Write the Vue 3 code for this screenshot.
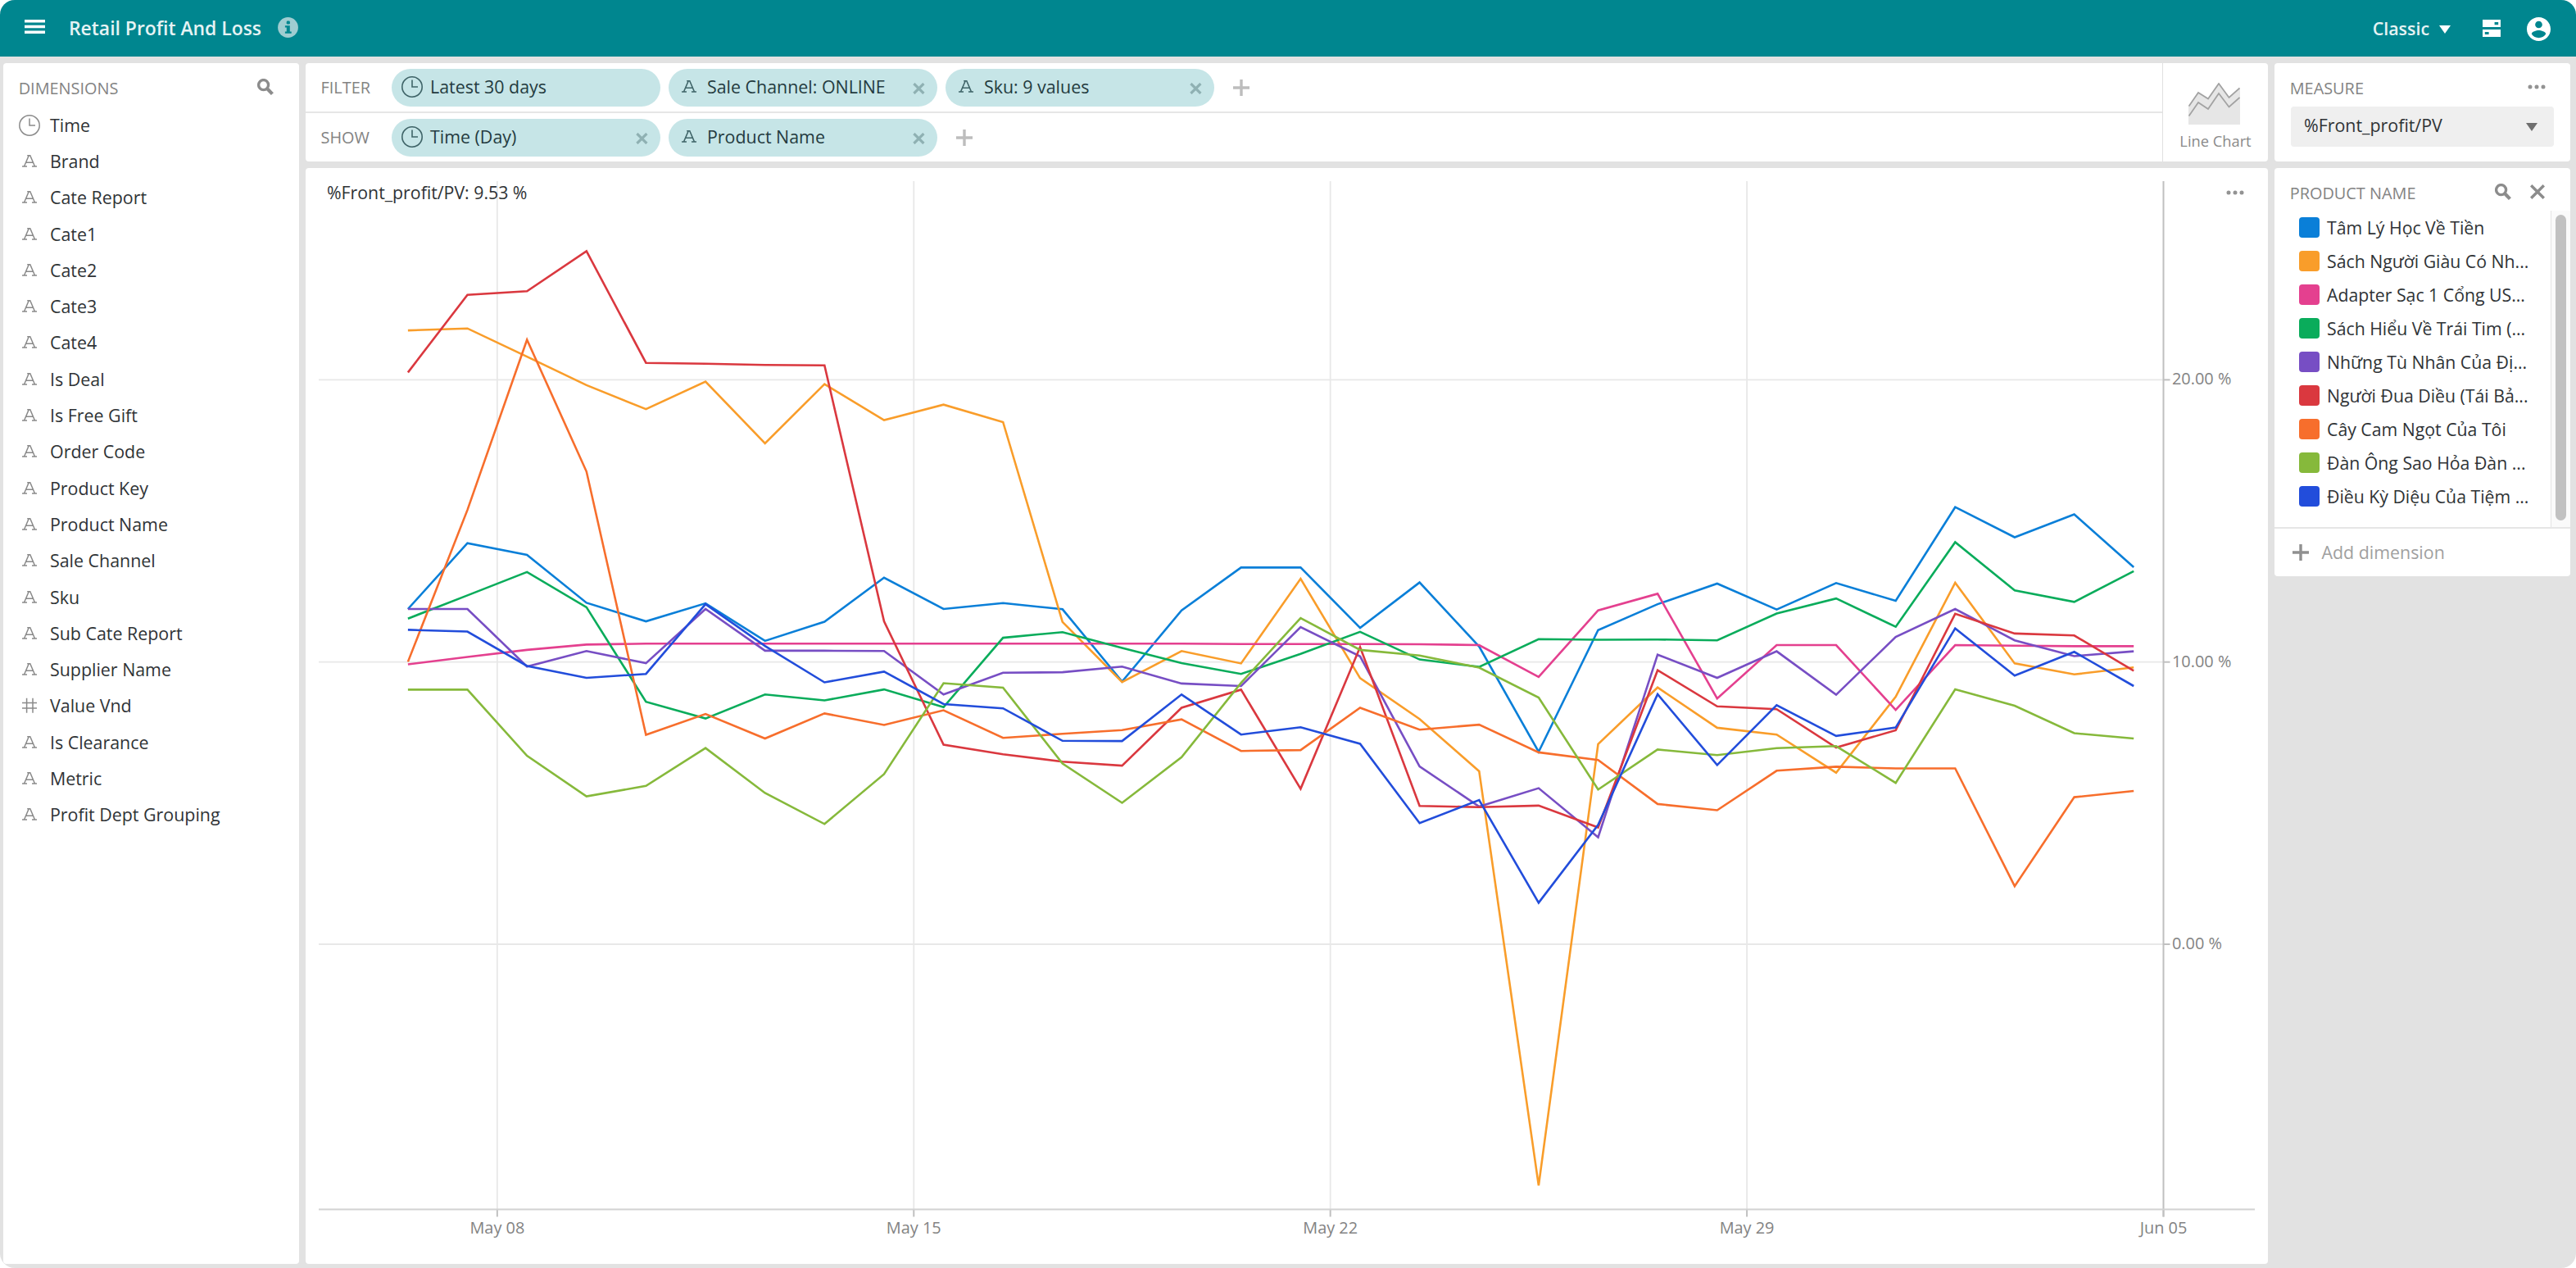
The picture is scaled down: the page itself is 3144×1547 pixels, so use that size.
<template>
  <div class="app">
    <header class="topbar">
      <svg class="menu" viewBox="0 0 25 17">
        <path d="M0 0h25v3.6H0zM0 6.7h25v3.6H0zM0 13.4h25V17H0z" />
      </svg>
      <h1>Retail Profit And Loss</h1>
      <svg class="info" viewBox="0 0 25 25">
        <circle cx="12.5" cy="12.5" r="12.4" />
        <rect class="mark" x="10.7" y="4.6" width="4.2" height="4" rx="1.4" />
        <path class="mark" d="M8.9 10.2h5.9v7.2h1.9v2.4H8.9v-2.4h1.9v-4.8H8.9z" />
      </svg>
      <div class="spacer"></div>
      <div class="theme">
        <span>Classic</span>
        <svg class="caret" viewBox="0 0 14 10"><path d="M0 0h14L7 10z" /></svg>
      </div>
      <svg class="server" viewBox="0 0 22 21">
        <path fill-rule="evenodd" d="M0 0h22v9H0zM14.6 3.1h4.6v3.1h-4.6zM0 12h22v9H0zM2.8 14.9h4.8v3.1H2.8z" />
      </svg>
      <svg class="avatar" viewBox="2 2 20 20">
        <path d="M12 2C6.48 2 2 6.48 2 12s4.48 10 10 10 10-4.48 10-10S17.52 2 12 2zm0 3.2c1.66 0 3 1.34 3 3s-1.34 3-3 3-3-1.34-3-3 1.34-3 3-3zm0 14.2c-2.5 0-4.71-1.28-6-3.22.03-1.99 4-3.08 6-3.08 1.99 0 5.97 1.09 6 3.08-1.29 1.94-3.5 3.22-6 3.22z" />
      </svg>
    </header>

    <main class="main">
      <aside class="panel">
        <div class="panel-head">
          <span>DIMENSIONS</span>
          <svg class="search" viewBox="0 0 20 20"><circle cx="7.6" cy="7.6" r="6" /><path d="M12 12l6.4 6.6" /></svg>
        </div>
        <ul class="dims">
          <li v-for="d in dimensions" :key="d.name">
            <svg class="type" viewBox="0 0 26 26"><path :d="typeIcons[d.type]" /></svg>
            <span>{{ d.name }}</span>
          </li>
        </ul>
      </aside>

      <section class="center">
        <div class="panel controls">
          <div class="tiles">
            <div v-for="row in tileRows" :key="row.label" class="tile-row">
              <span class="row-label">{{ row.label }}</span>
              <div v-for="t in row.items" :key="t.text" class="chip">
                <svg class="type" viewBox="0 0 26 26"><path :d="typeIcons[t.type]" /></svg>
                <span>{{ t.text }}</span>
                <svg v-if="t.removable" class="remove" viewBox="0 0 15 14"><path d="M1.4 1l12 12M13.4 1l-12 12" /></svg>
              </div>
              <svg class="add" viewBox="0 0 20 20"><path d="M10 0v20M0 10h20" /></svg>
            </div>
          </div>
          <div class="vis">
            <svg class="vis-icon" viewBox="0 0 63 51">
              <path class="area" d="M0 28.5L12 12l12 7.5L37 1l12.5 17L63 6.5V51H0z" />
              <path class="line" d="M.5 28.5L12 12l12 7.5L37 1l12.5 17L62.5 6.5M.5 40.5L12 24l12 8L37 13l12.5 16.5L62.5 18" />
            </svg>
            <span>Line Chart</span>
          </div>
        </div>

        <div class="panel chart">
          <svg class="plot" viewBox="0 0 2395 1337">
            <g class="grid">
              <line v-for="t in xTicks.slice(0, 4)" :key="t.label" :x1="t.x" :x2="t.x" y1="16" :y2="axisY" />
              <line v-for="t in yTicks" :key="t.label" x1="16" :x2="axisX" :y1="t.y" :y2="t.y" />
            </g>
            <g class="axis">
              <path :d="`M${axisX} 16V${axisY + 9}`" />
              <line v-for="t in yTicks" :key="t.label" :x1="axisX" :x2="axisX + 8" :y1="t.y" :y2="t.y" />
              <line v-for="t in xTicks" :key="t.label" :x1="t.x" :x2="t.x" :y1="axisY" :y2="axisY + 9" />
              <path class="base" :d="`M16 ${axisY}H2379`" />
            </g>
            <path v-for="s in series" :key="s.name" class="series" :d="linePath(s.values)" :stroke="s.color" />
            <text v-for="t in yTicks" :key="t.label" :x="axisX + 10.5" :y="t.y + 6">{{ t.label }}</text>
            <text v-for="t in xTicks" :key="t.label" class="x-label" :x="t.x" :y="axisY + 29">{{ t.label }}</text>
          </svg>
          <div class="chart-title">%Front_profit/PV: 9.53 %</div>
          <svg class="dots chart-dots" viewBox="0 0 22 6"><path d="M3 3h0M11 3h0M19 3h0" /></svg>
        </div>
      </section>

      <aside class="right">
        <div class="panel measure">
          <div class="panel-head">
            <span>MEASURE</span>
            <svg class="dots" viewBox="0 0 22 6"><path d="M3 3h0M11 3h0M19 3h0" /></svg>
          </div>
          <div class="select">
            <span>%Front_profit/PV</span>
            <svg class="caret" viewBox="0 0 14 10"><path d="M0 0h14L7 10z" /></svg>
          </div>
        </div>

        <div class="panel legend">
          <div class="panel-head">
            <span>PRODUCT NAME</span>
            <svg class="search" viewBox="0 0 20 20"><circle cx="7.6" cy="7.6" r="6" /><path d="M12 12l6.4 6.6" /></svg>
            <svg class="close" viewBox="0 0 18 18"><path d="M1.2 1.2l15.6 15.6M16.8 1.2L1.2 16.8" /></svg>
          </div>
          <div class="legend-body">
            <ul>
              <li v-for="s in series" :key="s.name">
                <i class="swatch" :style="{ background: s.color }"></i>
                <span>{{ s.name }}</span>
              </li>
            </ul>
            <div class="track"><div class="thumb"></div></div>
          </div>
          <div class="add-dimension">
            <svg class="add" viewBox="0 0 20 20"><path d="M10 0v20M0 10h20" /></svg>
            <span>Add dimension</span>
          </div>
        </div>
      </aside>
    </main>
  </div>
</template>

<script setup>
import { computed } from 'vue'

const typeIcons = {
  time: 'M25.2 13a12.2 12.2 0 1 1-24.4 0a12.2 12.2 0 1 1 24.4 0zM13 4.5V13h7',
  string: 'M4 19h6M16 19h6M6.6 18.8L12.2 5.8h1.6L19.4 18.8M10.2 5.8h3M8.8 14.2h8.4',
  number: 'M9.6 3.8v18M17 3.8v18M4 9.6h18M4 16h18'
}

const dimensions = [
  { name: 'Time', type: 'time' },
  { name: 'Brand', type: 'string' },
  { name: 'Cate Report', type: 'string' },
  { name: 'Cate1', type: 'string' },
  { name: 'Cate2', type: 'string' },
  { name: 'Cate3', type: 'string' },
  { name: 'Cate4', type: 'string' },
  { name: 'Is Deal', type: 'string' },
  { name: 'Is Free Gift', type: 'string' },
  { name: 'Order Code', type: 'string' },
  { name: 'Product Key', type: 'string' },
  { name: 'Product Name', type: 'string' },
  { name: 'Sale Channel', type: 'string' },
  { name: 'Sku', type: 'string' },
  { name: 'Sub Cate Report', type: 'string' },
  { name: 'Supplier Name', type: 'string' },
  { name: 'Value Vnd', type: 'number' },
  { name: 'Is Clearance', type: 'string' },
  { name: 'Metric', type: 'string' },
  { name: 'Profit Dept Grouping', type: 'string' }
]

const tileRows = [
  {
    label: 'FILTER',
    items: [
      { text: 'Latest 30 days', type: 'time', removable: false },
      { text: 'Sale Channel: ONLINE', type: 'string', removable: true },
      { text: 'Sku: 9 values', type: 'string', removable: true }
    ]
  },
  {
    label: 'SHOW',
    items: [
      { text: 'Time (Day)', type: 'time', removable: true },
      { text: 'Product Name', type: 'string', removable: true }
    ]
  }
]

// one value per day, May 06 - Jun 04
const series = [
  {
    name: 'Tâm Lý Học Về Tiền',
    color: '#0a7fd8',
    values: [11.88, 14.21, 13.8, 12.1, 11.44, 12.08, 10.75, 11.43, 12.99, 11.88, 12.09, 11.87, 9.31, 11.83, 13.35, 13.35, 11.21, 12.82, 10.55, 6.82, 11.13, 12.05, 12.78, 11.86, 12.8, 12.17, 15.49, 14.42, 15.23, 13.36]
  },
  {
    name: 'Sách Người Giàu Có Nh...',
    color: '#f99d2a',
    values: [21.75, 21.82, 20.82, 19.81, 18.96, 19.94, 17.75, 19.85, 18.57, 19.12, 18.5, 11.42, 9.29, 10.39, 9.95, 12.95, 9.43, 7.98, 6.13, -8.55, 7.09, 9.1, 7.67, 7.43, 6.08, 8.77, 12.81, 9.95, 9.56, 9.81]
  },
  {
    name: 'Adapter Sạc 1 Cổng US...',
    color: '#e4408f',
    values: [9.92, 10.18, 10.43, 10.62, 10.65, 10.65, 10.65, 10.65, 10.65, 10.65, 10.65, 10.65, 10.65, 10.65, 10.64, 10.64, 10.64, 10.63, 10.6, 9.47, 11.83, 12.42, 8.71, 10.6, 10.6, 8.3, 10.6, 10.58, 10.56, 10.56]
  },
  {
    name: 'Sách Hiểu Về Trái Tim (...',
    color: '#0aac5b',
    values: [11.54, 12.36, 13.19, 11.94, 8.59, 8, 8.85, 8.64, 9.03, 8.4, 10.86, 11.06, 10.5, 9.96, 9.58, 10.29, 11.07, 10.09, 9.83, 10.81, 10.79, 10.8, 10.77, 11.72, 12.25, 11.25, 14.25, 12.54, 12.13, 13.22]
  },
  {
    name: 'Những Tù Nhân Của Đị...',
    color: '#774ec4',
    values: [11.88, 11.88, 9.84, 10.39, 9.96, 11.88, 10.4, 10.4, 10.39, 8.85, 9.62, 9.64, 9.84, 9.24, 9.15, 11.24, 10.2, 6.3, 4.88, 5.53, 3.79, 10.26, 9.44, 10.38, 8.84, 10.89, 11.88, 10.77, 10.21, 10.38]
  },
  {
    name: 'Người Đua Diều (Tái Bả...',
    color: '#da383f',
    values: [20.26, 23.01, 23.14, 24.56, 20.6, 20.57, 20.53, 20.51, 11.44, 7.07, 6.73, 6.47, 6.33, 8.38, 9.02, 5.51, 10.53, 4.9, 4.86, 4.91, 4.14, 9.71, 8.43, 8.33, 6.97, 7.58, 11.71, 11.01, 10.94, 9.69]
  },
  {
    name: 'Cây Cam Ngọt Của Tôi',
    color: '#f76e2c',
    values: [10.01, 15.39, 21.42, 16.75, 7.42, 8.16, 7.29, 8.18, 7.77, 8.29, 7.31, 7.46, 7.59, 7.97, 6.85, 6.88, 8.38, 7.6, 7.78, 6.8, 6.53, 4.97, 4.75, 6.15, 6.29, 6.23, 6.23, 2.06, 5.21, 5.43]
  },
  {
    name: 'Đàn Ông Sao Hỏa Đàn ...',
    color: '#86b93b',
    values: [9.02, 9.02, 6.68, 5.24, 5.61, 6.95, 5.36, 4.26, 6.03, 9.25, 9.09, 6.4, 5.01, 6.63, 9.26, 11.56, 10.43, 10.23, 9.8, 8.74, 5.48, 6.9, 6.7, 6.95, 7.02, 5.72, 9.03, 8.45, 7.48, 7.29]
  },
  {
    name: 'Điều Kỳ Diệu Của Tiệm ...',
    color: '#224ddb',
    values: [11.14, 11.08, 9.86, 9.44, 9.58, 12.05, 10.57, 9.28, 9.66, 8.51, 8.36, 7.21, 7.2, 8.85, 7.43, 7.69, 7.1, 4.29, 5.11, 1.47, 4.23, 8.86, 6.35, 8.47, 7.38, 7.68, 11.19, 9.52, 10.36, 9.15]
  }
]

const axisX = 2267.5
const axisY = 1270.5
const dayWidth = 72.63
const zeroY = 947

const scaleX = (day) => axisX - (30 - day - 0.5) * dayWidth
const scaleY = (v) => zeroY - v * 34.43

const linePath = (values) =>
  'M' + values.map((v, i) => scaleX(i).toFixed(1) + ' ' + scaleY(v).toFixed(1)).join('L')

const xTicks = computed(() =>
  ['May 08', 'May 15', 'May 22', 'May 29', 'Jun 05'].map((label, i) => ({
    label,
    x: axisX - (4 - i) * 7 * dayWidth
  }))
)

const yTicks = computed(() =>
  [20, 10, 0].map((v) => ({ label: v.toFixed(2) + ' %', y: scaleY(v) }))
)
</script>

<style>
body {
  background: #fff;
}
</style>

<style scoped>
.app {
  display: flex;
  flex-direction: column;
  width: 3144px;
  height: 1547px;
  overflow: hidden;
  border-radius: 18px;
  background: #e2e2e2;
  font-family: "Open Sans", "Noto Sans", sans-serif;
  font-size: 21.4px;
  line-height: 30px;
  color: #2f3336;
}

svg {
  display: block;
  flex: none;
}

ul {
  margin: 0;
  padding: 0;
  list-style: none;
}

/* top bar */
.topbar {
  display: flex;
  align-items: center;
  height: 69px;
  flex: none;
  padding: 0 31px 0 30px;
  box-sizing: border-box;
  background: #00868f;
  color: #fff;
}

.topbar svg {
  fill: #fff;
}

.menu {
  width: 25px;
  height: 17px;
  margin-bottom: 4px;
}

h1 {
  margin: 0 0 0 29px;
  font-size: 22.9px;
  font-weight: 600;
  color: #e6f3f4;
}

.topbar .info {
  width: 25px;
  height: 25px;
  margin: 0 0 2px 20px;
  fill: #9fcdd1;
}

.topbar .info .mark {
  fill: #00868f;
}

.spacer {
  flex: 1;
}

.theme {
  display: flex;
  align-items: center;
  gap: 12px;
  font-weight: 600;
  color: #e6f3f4;
}

.caret {
  width: 14px;
  height: 10px;
}

.theme .caret {
  margin-top: 3px;
}

.server {
  width: 22px;
  height: 21px;
  margin-left: 39px;
}

.avatar {
  width: 29px;
  height: 29px;
  margin-left: 32px;
  margin-top: 2px;
}

/* columns */
.main {
  flex: 1;
  display: grid;
  grid-template-columns: 361px 1fr 361px;
  gap: 8px;
  padding: 8px 7px 5px 4px;
  min-height: 0;
}

.panel {
  background: #fff;
  border-radius: 4px;
  overflow: hidden;
}

.panel-head {
  display: flex;
  align-items: center;
  height: 52px;
  box-sizing: border-box;
  padding: 9px 31px 0 18.7px;
  font-size: 19.9px;
  color: #838383;
}

.panel-head span {
  flex: 1;
}

.search {
  width: 20px;
  height: 20px;
  margin-bottom: 4px;
  fill: none;
  stroke: #8c8c8c;
  stroke-width: 3.4;
}

.search path {
  stroke-width: 4.2;
}

.close {
  width: 18px;
  height: 18px;
  margin: 0 0 4px 23px;
  stroke: #8c8c8c;
  stroke-width: 3.4;
}

.dots {
  width: 22px;
  height: 6px;
  margin: 0 -1px 3px 0;
  stroke: #939393;
  stroke-width: 5;
  stroke-linecap: round;
}

.type {
  width: 26px;
  height: 26px;
  fill: none;
  stroke: #8a8a8a;
  stroke-width: 1.5;
}

/* dimension list */
.dims {
  padding: 1.5px 0 0 18.5px;
}

.dims li {
  display: flex;
  align-items: center;
  gap: 12.5px;
  height: 44.3px;
}

/* filter / show */
.center {
  display: flex;
  flex-direction: column;
  gap: 8px;
  min-width: 0;
}

.controls {
  display: flex;
  height: 120px;
  flex: none;
}

.tiles {
  flex: 1;
}

.tile-row {
  display: flex;
  align-items: center;
  gap: 10px;
  height: 59px;
  padding-left: 18.5px;
}

.tile-row + .tile-row {
  border-top: 2px solid #e6e6e6;
}

.row-label {
  width: 76px;
  font-size: 19.9px;
  color: #838383;
}

.chip {
  display: flex;
  align-items: center;
  width: 328px;
  height: 46px;
  box-sizing: border-box;
  padding: 0 15px 2px 12px;
  border-radius: 23px;
  background: #c6e5e7;
  color: #243b3f;
}

.chip .type {
  margin-right: 9.5px;
  stroke: #3f6468;
  stroke-width: 1.6;
}

.chip span {
  flex: 1;
}

.remove {
  width: 15px;
  height: 14px;
  margin-top: 4px;
  stroke: #8fb1b3;
  stroke-width: 3.2;
}

.add {
  width: 20px;
  height: 20px;
  margin-left: 13px;
  stroke: #bdbdbd;
  stroke-width: 3.4;
}

.vis {
  display: flex;
  flex-direction: column;
  align-items: center;
  width: 129px;
  box-sizing: border-box;
  padding-top: 24px;
  border-left: 1.5px solid #e0e0e0;
  font-size: 18.3px;
  color: #8a8a8a;
}

.vis-icon {
  width: 63px;
  height: 51px;
  margin: 0 3px 5px 0;
  fill: none;
}

.vis-icon .area {
  fill: #e6e6e6;
}

.vis-icon .line {
  stroke: #a2a2a2;
  stroke-width: 1.8;
}

/* chart */
.chart {
  position: relative;
  flex: 1;
}

.plot {
  width: 2395px;
  height: 1337px;
  font-size: 19.9px;
}

.plot text {
  fill: #838383;
}

.plot .x-label {
  text-anchor: middle;
}

.grid line {
  stroke: #e8e8e8;
  stroke-width: 1.8;
}

.axis {
  fill: none;
  stroke: #c0c0c0;
  stroke-width: 2;
}

.axis .base {
  stroke: #d2d2d2;
}

.series {
  fill: none;
  stroke-width: 2.6;
}

.chart-title {
  position: absolute;
  left: 26px;
  top: 15px;
  font-size: 21.3px;
}

.chart-dots {
  position: absolute;
  right: 29px;
  top: 27px;
  margin: 0;
}

/* right column */
.right {
  display: flex;
  flex-direction: column;
  gap: 8px;
}

.measure {
  height: 120px;
}

.select {
  display: flex;
  align-items: center;
  justify-content: space-between;
  height: 49px;
  box-sizing: border-box;
  margin: 1px 20px 0;
  padding: 0 20px 3px 16px;
  border-radius: 4px;
  background: #efefef;
}

.select .caret {
  margin-top: 3px;
  fill: #6e6e6e;
}

.legend-body {
  display: flex;
  height: 386px;
}

.legend-body ul {
  flex: 1;
  padding-left: 29.5px;
}

.legend-body li {
  display: flex;
  align-items: center;
  gap: 9.5px;
  height: 41px;
  font-size: 21.25px;
}

.swatch {
  width: 25px;
  height: 25px;
  border-radius: 4px;
}

.track {
  width: 24px;
  box-sizing: border-box;
  padding: 5px 5px 8px;
  border-left: 1px solid #e4e4e4;
  background: #fafafa;
}

.thumb {
  width: 13px;
  height: 100%;
  border-radius: 7px;
  background: #c1c1c1;
}

.add-dimension {
  display: flex;
  align-items: center;
  gap: 16px;
  height: 58px;
  padding-left: 21.5px;
  border-top: 2px solid #e6e6e6;
  color: #a0a0a0;
}

.add-dimension .add {
  margin: 0;
  stroke: #909090;
}
</style>
